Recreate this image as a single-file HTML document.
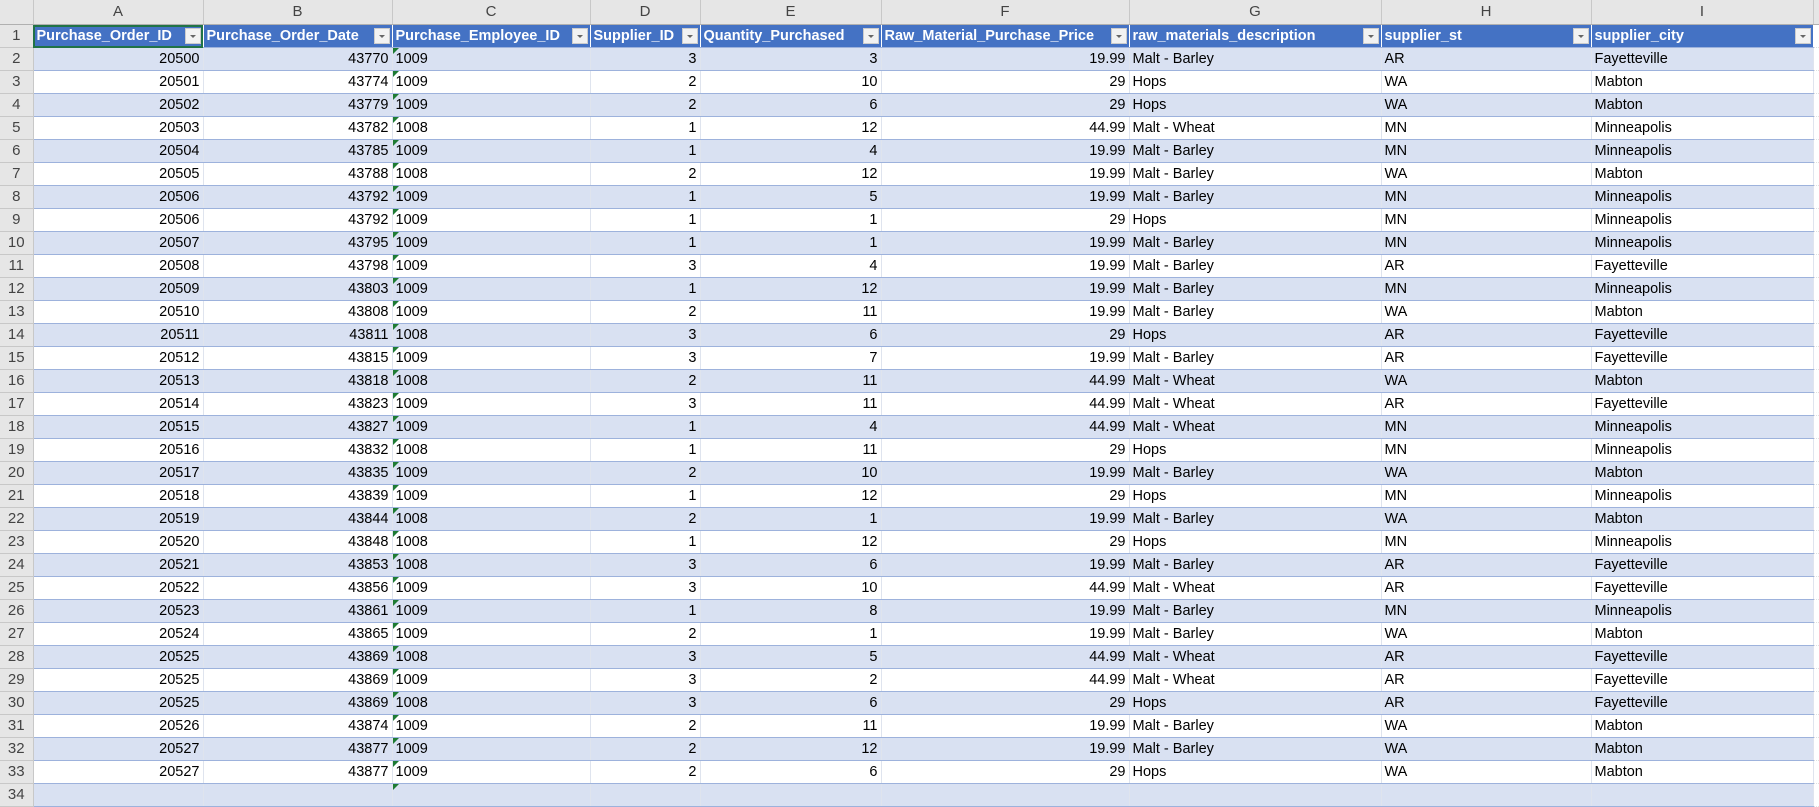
<!DOCTYPE html>
<html><head><meta charset="utf-8"><style>
body{margin:0;width:1819px;height:789px;overflow:hidden;background:#fff;font-family:"Liberation Sans",Arial,sans-serif;}
table{border-collapse:collapse;table-layout:fixed;font-size:14.5px;color:#000;width:1819px;}
td{height:22px;padding:0 3px;white-space:nowrap;overflow:hidden;border-bottom:1px solid #9db2dc;border-right:1px solid #dfe4ee;line-height:22px;position:relative;}
td.r{text-align:right}
tr.b td{background:#d9e1f2}
tr td.x{background:#fff !important;border-bottom:1px dotted #e0e0e0;border-right:0;border-left:1px solid #9a9a9a}
tr td.h, tr.hd td.h{background:#e6e6e6;color:#444;text-align:center;border-right:1px solid #c8c8c8;border-bottom:1px solid #c8c8c8;font-size:15px;padding:0;font-weight:normal}
tr.ch td{background:#e6e6e6;color:#444;text-align:center;height:24px;border-right:1px solid #c8c8c8;border-bottom:1px solid #b0b0b0;font-size:15px;}
tr.hd td{background:#4472c4;color:#fff;font-weight:bold;border-right:1px solid #fff;padding-right:22px;}
tr.hd td .dd{position:absolute;right:2px;top:3px;width:16px;height:16px;background:#f2f2f2;border:1px solid #ccc;box-sizing:border-box}
tr.hd td .dd:after{content:"";position:absolute;left:4px;top:6px;border-left:3px solid transparent;border-right:3px solid transparent;border-top:3px solid #666}
td.c:before{content:"";position:absolute;left:0;top:0;border-top:6px solid #1e7b34;border-right:6px solid transparent}
td.sel{outline:2px solid #217346;outline-offset:-2px}
</style></head><body>
<table>
<colgroup><col style="width:33px"><col style="width:170px"><col style="width:189px"><col style="width:198px"><col style="width:110px"><col style="width:181px"><col style="width:248px"><col style="width:252px"><col style="width:210px"><col style="width:222px"><col style="width:6px"></colgroup>
<tr class="ch"><td></td><td>A</td><td>B</td><td>C</td><td>D</td><td>E</td><td>F</td><td>G</td><td>H</td><td>I</td><td></td></tr>
<tr class="hd"><td class="h">1</td><td class="sel">Purchase_Order_ID<span class="dd"></span></td><td>Purchase_Order_Date<span class="dd"></span></td><td>Purchase_Employee_ID<span class="dd"></span></td><td>Supplier_ID<span class="dd"></span></td><td>Quantity_Purchased<span class="dd"></span></td><td>Raw_Material_Purchase_Price<span class="dd"></span></td><td>raw_materials_description<span class="dd"></span></td><td>supplier_st<span class="dd"></span></td><td>supplier_city<span class="dd"></span></td><td class="x"></td></tr>
<tr class="b"><td class="h">2</td><td class="r">20500</td><td class="r">43770</td><td class="c">1009</td><td class="r">3</td><td class="r">3</td><td class="r">19.99</td><td>Malt - Barley</td><td>AR</td><td>Fayetteville</td><td class="x"></td></tr>
<tr><td class="h">3</td><td class="r">20501</td><td class="r">43774</td><td class="c">1009</td><td class="r">2</td><td class="r">10</td><td class="r">29</td><td>Hops</td><td>WA</td><td>Mabton</td><td class="x"></td></tr>
<tr class="b"><td class="h">4</td><td class="r">20502</td><td class="r">43779</td><td class="c">1009</td><td class="r">2</td><td class="r">6</td><td class="r">29</td><td>Hops</td><td>WA</td><td>Mabton</td><td class="x"></td></tr>
<tr><td class="h">5</td><td class="r">20503</td><td class="r">43782</td><td class="c">1008</td><td class="r">1</td><td class="r">12</td><td class="r">44.99</td><td>Malt - Wheat</td><td>MN</td><td>Minneapolis</td><td class="x"></td></tr>
<tr class="b"><td class="h">6</td><td class="r">20504</td><td class="r">43785</td><td class="c">1009</td><td class="r">1</td><td class="r">4</td><td class="r">19.99</td><td>Malt - Barley</td><td>MN</td><td>Minneapolis</td><td class="x"></td></tr>
<tr><td class="h">7</td><td class="r">20505</td><td class="r">43788</td><td class="c">1008</td><td class="r">2</td><td class="r">12</td><td class="r">19.99</td><td>Malt - Barley</td><td>WA</td><td>Mabton</td><td class="x"></td></tr>
<tr class="b"><td class="h">8</td><td class="r">20506</td><td class="r">43792</td><td class="c">1009</td><td class="r">1</td><td class="r">5</td><td class="r">19.99</td><td>Malt - Barley</td><td>MN</td><td>Minneapolis</td><td class="x"></td></tr>
<tr><td class="h">9</td><td class="r">20506</td><td class="r">43792</td><td class="c">1009</td><td class="r">1</td><td class="r">1</td><td class="r">29</td><td>Hops</td><td>MN</td><td>Minneapolis</td><td class="x"></td></tr>
<tr class="b"><td class="h">10</td><td class="r">20507</td><td class="r">43795</td><td class="c">1009</td><td class="r">1</td><td class="r">1</td><td class="r">19.99</td><td>Malt - Barley</td><td>MN</td><td>Minneapolis</td><td class="x"></td></tr>
<tr><td class="h">11</td><td class="r">20508</td><td class="r">43798</td><td class="c">1009</td><td class="r">3</td><td class="r">4</td><td class="r">19.99</td><td>Malt - Barley</td><td>AR</td><td>Fayetteville</td><td class="x"></td></tr>
<tr class="b"><td class="h">12</td><td class="r">20509</td><td class="r">43803</td><td class="c">1009</td><td class="r">1</td><td class="r">12</td><td class="r">19.99</td><td>Malt - Barley</td><td>MN</td><td>Minneapolis</td><td class="x"></td></tr>
<tr><td class="h">13</td><td class="r">20510</td><td class="r">43808</td><td class="c">1009</td><td class="r">2</td><td class="r">11</td><td class="r">19.99</td><td>Malt - Barley</td><td>WA</td><td>Mabton</td><td class="x"></td></tr>
<tr class="b"><td class="h">14</td><td class="r">20511</td><td class="r">43811</td><td class="c">1008</td><td class="r">3</td><td class="r">6</td><td class="r">29</td><td>Hops</td><td>AR</td><td>Fayetteville</td><td class="x"></td></tr>
<tr><td class="h">15</td><td class="r">20512</td><td class="r">43815</td><td class="c">1009</td><td class="r">3</td><td class="r">7</td><td class="r">19.99</td><td>Malt - Barley</td><td>AR</td><td>Fayetteville</td><td class="x"></td></tr>
<tr class="b"><td class="h">16</td><td class="r">20513</td><td class="r">43818</td><td class="c">1008</td><td class="r">2</td><td class="r">11</td><td class="r">44.99</td><td>Malt - Wheat</td><td>WA</td><td>Mabton</td><td class="x"></td></tr>
<tr><td class="h">17</td><td class="r">20514</td><td class="r">43823</td><td class="c">1009</td><td class="r">3</td><td class="r">11</td><td class="r">44.99</td><td>Malt - Wheat</td><td>AR</td><td>Fayetteville</td><td class="x"></td></tr>
<tr class="b"><td class="h">18</td><td class="r">20515</td><td class="r">43827</td><td class="c">1009</td><td class="r">1</td><td class="r">4</td><td class="r">44.99</td><td>Malt - Wheat</td><td>MN</td><td>Minneapolis</td><td class="x"></td></tr>
<tr><td class="h">19</td><td class="r">20516</td><td class="r">43832</td><td class="c">1008</td><td class="r">1</td><td class="r">11</td><td class="r">29</td><td>Hops</td><td>MN</td><td>Minneapolis</td><td class="x"></td></tr>
<tr class="b"><td class="h">20</td><td class="r">20517</td><td class="r">43835</td><td class="c">1009</td><td class="r">2</td><td class="r">10</td><td class="r">19.99</td><td>Malt - Barley</td><td>WA</td><td>Mabton</td><td class="x"></td></tr>
<tr><td class="h">21</td><td class="r">20518</td><td class="r">43839</td><td class="c">1009</td><td class="r">1</td><td class="r">12</td><td class="r">29</td><td>Hops</td><td>MN</td><td>Minneapolis</td><td class="x"></td></tr>
<tr class="b"><td class="h">22</td><td class="r">20519</td><td class="r">43844</td><td class="c">1008</td><td class="r">2</td><td class="r">1</td><td class="r">19.99</td><td>Malt - Barley</td><td>WA</td><td>Mabton</td><td class="x"></td></tr>
<tr><td class="h">23</td><td class="r">20520</td><td class="r">43848</td><td class="c">1008</td><td class="r">1</td><td class="r">12</td><td class="r">29</td><td>Hops</td><td>MN</td><td>Minneapolis</td><td class="x"></td></tr>
<tr class="b"><td class="h">24</td><td class="r">20521</td><td class="r">43853</td><td class="c">1008</td><td class="r">3</td><td class="r">6</td><td class="r">19.99</td><td>Malt - Barley</td><td>AR</td><td>Fayetteville</td><td class="x"></td></tr>
<tr><td class="h">25</td><td class="r">20522</td><td class="r">43856</td><td class="c">1009</td><td class="r">3</td><td class="r">10</td><td class="r">44.99</td><td>Malt - Wheat</td><td>AR</td><td>Fayetteville</td><td class="x"></td></tr>
<tr class="b"><td class="h">26</td><td class="r">20523</td><td class="r">43861</td><td class="c">1009</td><td class="r">1</td><td class="r">8</td><td class="r">19.99</td><td>Malt - Barley</td><td>MN</td><td>Minneapolis</td><td class="x"></td></tr>
<tr><td class="h">27</td><td class="r">20524</td><td class="r">43865</td><td class="c">1009</td><td class="r">2</td><td class="r">1</td><td class="r">19.99</td><td>Malt - Barley</td><td>WA</td><td>Mabton</td><td class="x"></td></tr>
<tr class="b"><td class="h">28</td><td class="r">20525</td><td class="r">43869</td><td class="c">1008</td><td class="r">3</td><td class="r">5</td><td class="r">44.99</td><td>Malt - Wheat</td><td>AR</td><td>Fayetteville</td><td class="x"></td></tr>
<tr><td class="h">29</td><td class="r">20525</td><td class="r">43869</td><td class="c">1009</td><td class="r">3</td><td class="r">2</td><td class="r">44.99</td><td>Malt - Wheat</td><td>AR</td><td>Fayetteville</td><td class="x"></td></tr>
<tr class="b"><td class="h">30</td><td class="r">20525</td><td class="r">43869</td><td class="c">1008</td><td class="r">3</td><td class="r">6</td><td class="r">29</td><td>Hops</td><td>AR</td><td>Fayetteville</td><td class="x"></td></tr>
<tr><td class="h">31</td><td class="r">20526</td><td class="r">43874</td><td class="c">1009</td><td class="r">2</td><td class="r">11</td><td class="r">19.99</td><td>Malt - Barley</td><td>WA</td><td>Mabton</td><td class="x"></td></tr>
<tr class="b"><td class="h">32</td><td class="r">20527</td><td class="r">43877</td><td class="c">1009</td><td class="r">2</td><td class="r">12</td><td class="r">19.99</td><td>Malt - Barley</td><td>WA</td><td>Mabton</td><td class="x"></td></tr>
<tr><td class="h">33</td><td class="r">20527</td><td class="r">43877</td><td class="c">1009</td><td class="r">2</td><td class="r">6</td><td class="r">29</td><td>Hops</td><td>WA</td><td>Mabton</td><td class="x"></td></tr>
<tr class="b"><td class="h">34</td><td></td><td></td><td class="c"></td><td></td><td></td><td></td><td></td><td></td><td></td><td class="x"></td></tr>
</table>
</body></html>
